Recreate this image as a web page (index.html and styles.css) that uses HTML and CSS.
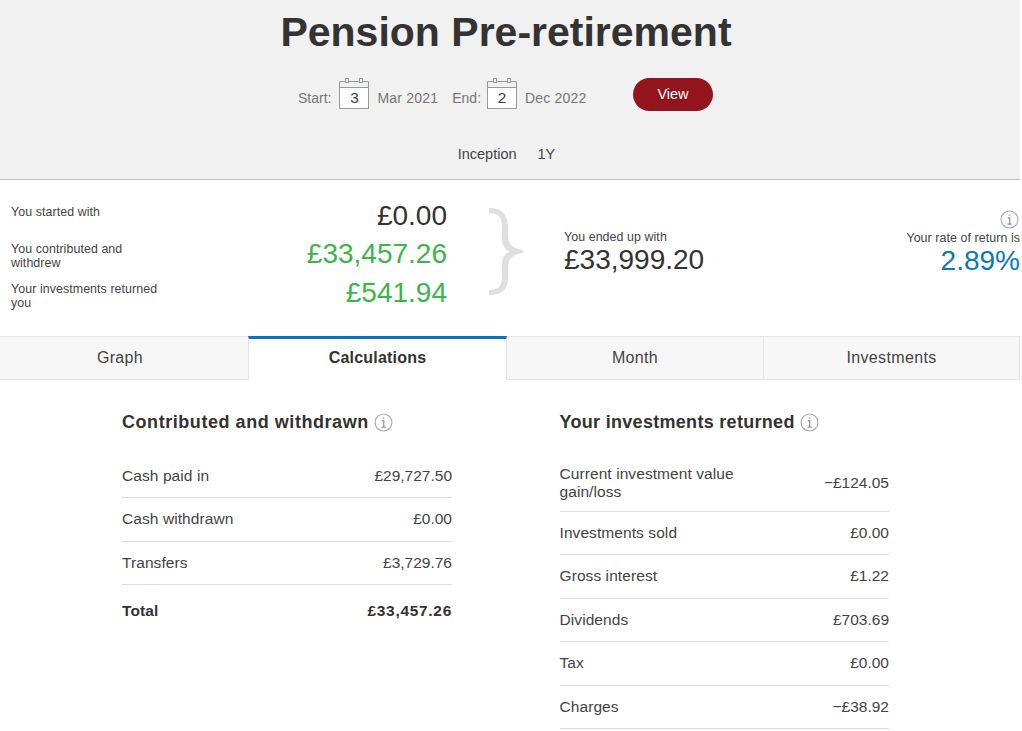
FILE: index.html
```html
<!DOCTYPE html>
<html lang="en">
<head>
<meta charset="utf-8">
<title>Pension Pre-retirement</title>
<link rel="stylesheet" href="styles.css">
</head>
<body>
<div class="page">
  <header class="head">
    <h1 class="title">Pension Pre-retirement</h1>
    <div class="dates">
      <span class="lbl">Start:</span>
      <span class="cal cal-a"><svg class="cal-top" viewBox="0 0 30 9" width="30" height="9"><path d="M0.5 9V3.5H29.5V9" fill="none" stroke="#999"/><rect x="6.5" y="0.5" width="3" height="4" fill="#f1f1f1" stroke="#999"/><rect x="20.5" y="0.5" width="3" height="4" fill="#f1f1f1" stroke="#999"/></svg><span class="cal-day">3</span></span>
      <span class="lbl month month-a">Mar 2021</span>
      <span class="lbl end-lbl">End:</span>
      <span class="cal cal-b"><svg class="cal-top" viewBox="0 0 30 9" width="30" height="9"><path d="M0.5 9V3.5H29.5V9" fill="none" stroke="#999"/><rect x="6.5" y="0.5" width="3" height="4" fill="#f1f1f1" stroke="#999"/><rect x="20.5" y="0.5" width="3" height="4" fill="#f1f1f1" stroke="#999"/></svg><span class="cal-day">2</span></span>
      <span class="lbl month month-b">Dec 2022</span>
      <span class="view">View</span>
    </div>
    <div class="ranges"><span>Inception</span><span>1Y</span></div>
  </header>

  <section class="summary">
    <div class="rows">
      <div class="row r1"><span class="cap">You started with</span><span class="amt">£0.00</span></div>
      <div class="row r2"><span class="cap">You contributed and withdrew</span><span class="amt green">£33,457.26</span></div>
      <div class="row r3"><span class="cap">Your investments returned you</span><span class="amt green">£541.94</span></div>
    </div>
    <svg class="brace" viewBox="484 205 46 100" width="46" height="100"><path d="M489 208C500 208 508 212 508 228L508 236C508 244 513 249 523 250L523 253C513 254 508 259 508 267L508 278C508 291 500 295 489 295L489 290C498 290 502 287 502 276L502 264C502 258 505 253 510 251.5C505 250 502 245 502 238L502 227C502 216 498 213 489 213Z" fill="#dfdfdf"/></svg>
    <div class="ended">
      <div class="cap">You ended up with</div>
      <div class="amt">£33,999.20</div>
    </div>
    <div class="rate">
      <svg class="info" viewBox="0 0 20 20" width="19" height="19"><circle cx="10" cy="10" r="8.9" fill="none" stroke="#aaa" stroke-width="1.2"/><path d="M9.1 5.3h1.7M8.2 8.3h2.1v6.3M8 14.8h4.4" fill="none" stroke="#8c8c8c" stroke-width="1.2"/></svg>
      <div class="cap">Your rate of return is</div>
      <div class="amt blue">2.89%</div>
    </div>
  </section>

  <nav class="tabs">
    <div class="tab">Graph</div>
    <div class="tab active">Calculations</div>
    <div class="tab">Month</div>
    <div class="tab">Investments</div>
  </nav>

  <main class="calc">
    <section class="col left">
      <h2 class="sub">Contributed and withdrawn <svg class="info" viewBox="0 0 20 20" width="19" height="19"><circle cx="10" cy="10" r="8.9" fill="none" stroke="#aaa" stroke-width="1.2"/><path d="M9.1 5.3h1.7M8.2 8.3h2.1v6.3M8 14.8h4.4" fill="none" stroke="#8c8c8c" stroke-width="1.2"/></svg></h2>
      <div class="line"><span class="name">Cash paid in</span><span>£29,727.50</span></div>
      <div class="line"><span class="name">Cash withdrawn</span><span>£0.00</span></div>
      <div class="line"><span class="name">Transfers</span><span>£3,729.76</span></div>
      <div class="line total"><span class="name">Total</span><span class="sum">£33,457.26</span></div>
    </section>
    <section class="col right">
      <h2 class="sub">Your investments returned <svg class="info" viewBox="0 0 20 20" width="19" height="19"><circle cx="10" cy="10" r="8.9" fill="none" stroke="#aaa" stroke-width="1.2"/><path d="M9.1 5.3h1.7M8.2 8.3h2.1v6.3M8 14.8h4.4" fill="none" stroke="#8c8c8c" stroke-width="1.2"/></svg></h2>
      <div class="line tall"><span class="name wrap">Current investment value gain/loss</span><span>−£124.05</span></div>
      <div class="line"><span class="name">Investments sold</span><span>£0.00</span></div>
      <div class="line"><span class="name">Gross interest</span><span>£1.22</span></div>
      <div class="line"><span class="name">Dividends</span><span>£703.69</span></div>
      <div class="line"><span class="name">Tax</span><span>£0.00</span></div>
      <div class="line"><span class="name">Charges</span><span>−£38.92</span></div>
    </section>
  </main>
</div>
</body>
</html>
```
FILE: styles.css
```css
* { box-sizing: border-box; }
html, body { margin: 0; padding: 0; height: 731px; overflow: hidden; background: #fff; }
body { font-family: "Liberation Sans", Arial, sans-serif; color: #333; }
.page { width: 1020px; }

.head { height: 180px; background: #f1f1f1; border-bottom: 1px solid #bdbdbd; padding-right: 8px; display: flex; flex-direction: column; align-items: center; }
.title { margin: 8px 0 0; font-size: 41px; line-height: 48px; font-weight: 700; color: #333; }
.dates { margin-top: 18px; height: 34px; display: flex; align-items: flex-end; font-size: 14px; color: #767676; width: 424px; margin-left: 8px; position: relative; }
.lbl { line-height: 16px; margin-bottom: 2px; }
.cal { width: 30px; height: 30px; display: flex; flex-direction: column; }
.cal-a { margin-left: 8px; }
.cal-b { margin-left: 6px; }
.cal-top { display: block; flex: none; }
.cal-day { flex: 1; background: #fff; border: 1px solid #999; text-align: center; font-size: 15.5px; line-height: 20px; color: #5b3340; }
.month { letter-spacing: 0.2px; margin-left: 8px; }
.end-lbl { margin-left: 14px; }
.view { position: absolute; left: 335px; top: 4px; width: 80px; height: 33px; border-radius: 17px; background: #93141c; color: #fff; font-size: 14.5px; line-height: 32px; text-align: center; }
.ranges { margin-top: 37px; display: flex; gap: 21px; font-size: 14.5px; line-height: 18px; color: #444; margin-left: 1px; }

.summary { height: 156px; position: relative; display: flex; }
.rows { width: 447px; padding-top: 19px; }
.row { display: flex; justify-content: space-between; padding-left: 11px; }
.r1 { height: 35px; align-items: flex-start; }
.r2 { height: 39px; align-items: center; }
.r3 { height: 39px; align-items: center; }
.cap { font-size: 12.4px; line-height: 14px; color: #444; letter-spacing: 0.08px; }
.row .cap { width: 155px; }
.r1 .cap { margin-top: 6px; }
.r2 .cap { margin-top: 5px; }
.r3 .cap { margin-top: 6px; }
.amt { font-size: 28px; line-height: 34px; color: #333; font-weight: 400; }
.green { color: #3cb54a; }
.blue { color: #0a7ab5; }
.brace { position: absolute; left: 484px; top: 25px; display: block; }
.ended { position: absolute; left: 564px; top: 50px; }
.ended .amt { line-height: 30px; margin-top: 1px; }
.rate { position: absolute; right: 0; top: 30px; text-align: right; }
.rate .info { display: block; margin-left: auto; margin-right: 1px; }
.rate .cap { margin-top: 2px; }
.rate .amt { line-height: 30px; margin-top: 1px; }

.tabs { height: 44px; display: flex; background: #f7f7f7; border-top: 1px solid #e6e6e6; border-bottom: 1px solid #e6e6e6; }
.tab { flex: 0 0 257px; text-align: center; font-size: 16px; letter-spacing: 0.35px; line-height: 42px; color: #444; border-right: 1px solid #e6e6e6; }
.tab:first-child { flex-basis: 248px; border-right: 0; padding-right: 8px; }
.tab:last-child { flex-basis: 256px; }
.tab.active { flex-basis: 259px; margin-top: -1px; height: 44px; background: #fff; border-top: 3px solid #0f6fc0; border-left: 1px solid #e6e6e6; border-right: 1px solid #e6e6e6; font-weight: 700; letter-spacing: 0.2px; color: #333; line-height: 38px; margin-bottom: -1px; }

.calc { position: relative; display: flex; padding: 32px 0 0 122px; }
.col.left { width: 330px; }
.col.right { width: 329.5px; margin-left: 107.5px; }
.sub { margin: 0 0 22.5px; font-size: 18px; line-height: 20px; font-weight: 700; color: #333; display: flex; align-items: center; gap: 5px; white-space: nowrap; }
.left .sub { letter-spacing: 0.55px; }
.right .sub { letter-spacing: 0.3px; }
.line { display: flex; justify-content: space-between; align-items: center; min-height: 43.45px; border-bottom: 1px solid #dcdcdc; font-size: 15.5px; line-height: 18px; color: #444; }
.left .line { min-height: 43.6px; }
.name { letter-spacing: 0.08px; }
.line.tall { min-height: 57.3px; }
.wrap { width: 190px; }
.left .line.total { font-weight: 700; color: #333; border-bottom: 0; min-height: 52px; }
.sum { letter-spacing: 0.7px; }
```
